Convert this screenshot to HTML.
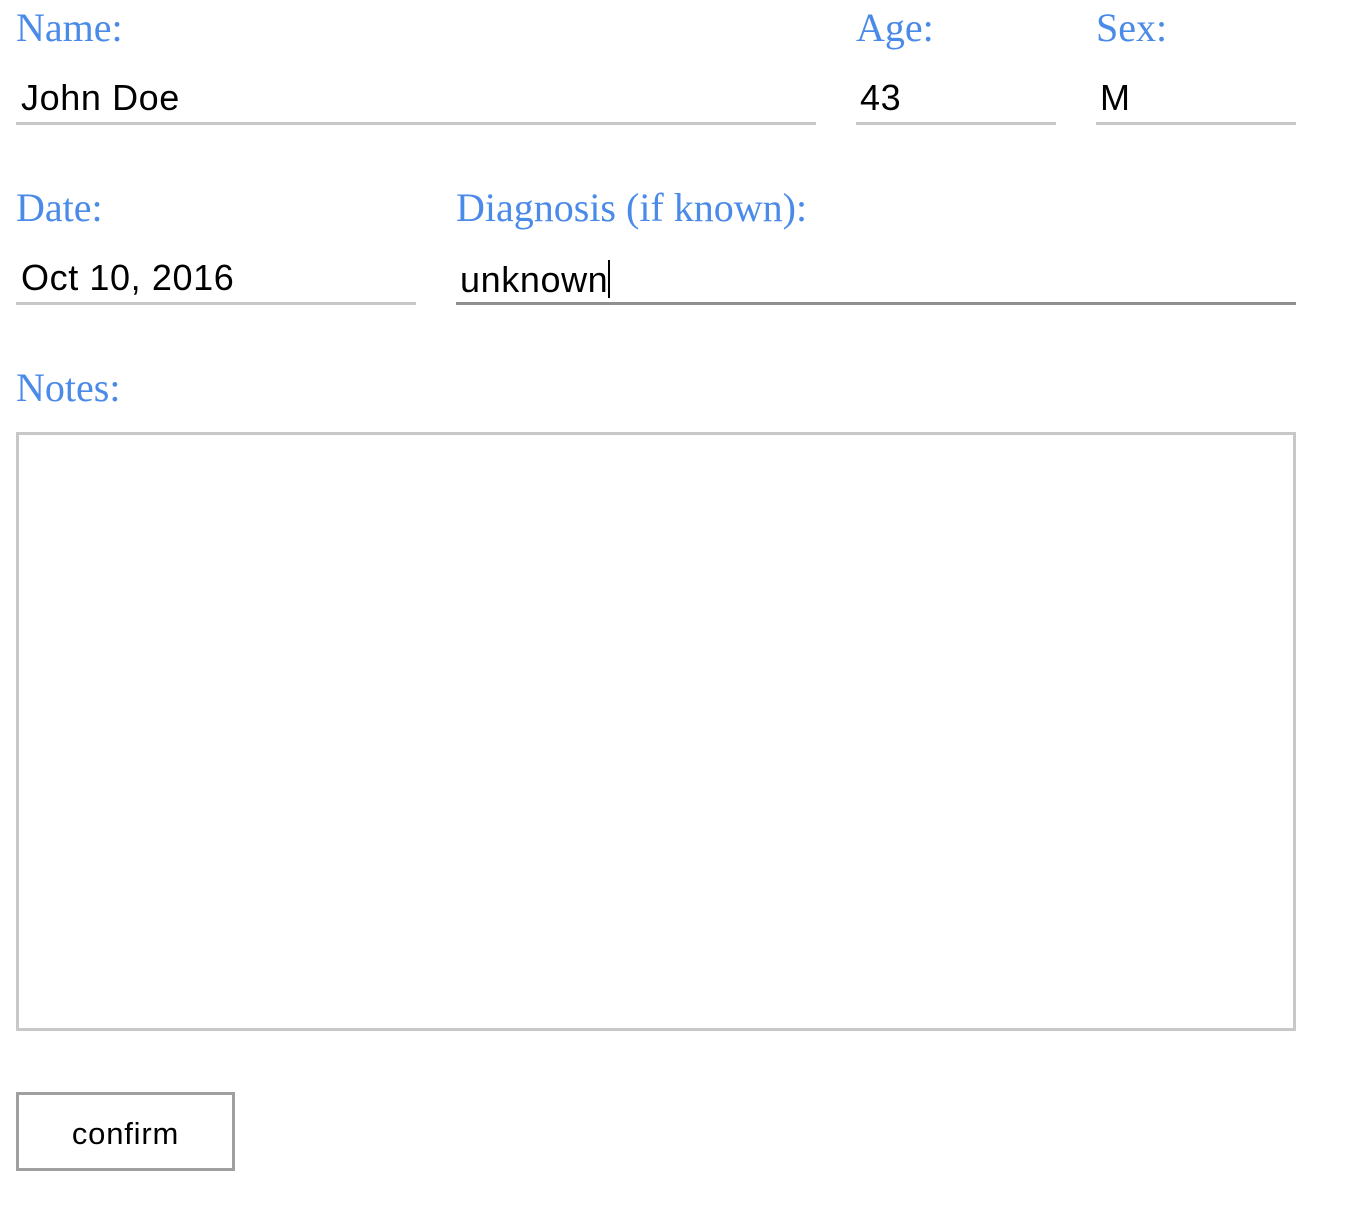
<!DOCTYPE html>
<html><head><style>
body{margin:0;background:#fff;width:1364px;height:1206px;position:relative;overflow:hidden}
.l{position:absolute;font-family:"Liberation Serif",serif;font-size:40px;color:#4a8ae8;line-height:1;white-space:nowrap}
.v{position:absolute;font-family:"Liberation Sans",sans-serif;font-size:36px;letter-spacing:0.6px;color:#000;line-height:1;white-space:nowrap}
.u{position:absolute;height:3px;background:#c8c8c8}
</style></head><body>
<div class="l" style="left:16px;top:8px">Name:</div>
<div class="l" style="left:856px;top:8px">Age:</div>
<div class="l" style="left:1096px;top:8px">Sex:</div>
<div class="v" style="left:21px;top:80px">John Doe</div>
<div class="v" style="left:860px;top:80px">43</div>
<div class="v" style="left:1100px;top:80px">M</div>
<div class="u" style="left:16px;top:122px;width:800px"></div>
<div class="u" style="left:856px;top:122px;width:200px"></div>
<div class="u" style="left:1096px;top:122px;width:200px"></div>

<div class="l" style="left:16px;top:188px">Date:</div>
<div class="l" style="left:456px;top:188px">Diagnosis (if known):</div>
<div class="v" style="left:21px;top:260px">Oct 10, 2016</div>
<div class="v" style="left:460px;top:260px">unknown<span style="display:inline-block;width:2px;height:38px;background:#000;vertical-align:-6px;margin-left:0px"></span></div>
<div class="u" style="left:16px;top:302px;width:400px"></div>
<div class="u" style="left:456px;top:302px;width:840px;background:#8f8f8f"></div>

<div class="l" style="left:16px;top:368px">Notes:</div>
<div style="position:absolute;left:16px;top:432px;width:1274px;height:593px;border:3px solid #c8c8c8"></div>

<div style="position:absolute;left:16px;top:1092px;width:213px;height:73px;border:3px solid #a0a0a0;font-family:'Liberation Sans',sans-serif;font-size:31px;letter-spacing:0.8px;line-height:78px;text-align:center">confirm</div>
</body></html>
